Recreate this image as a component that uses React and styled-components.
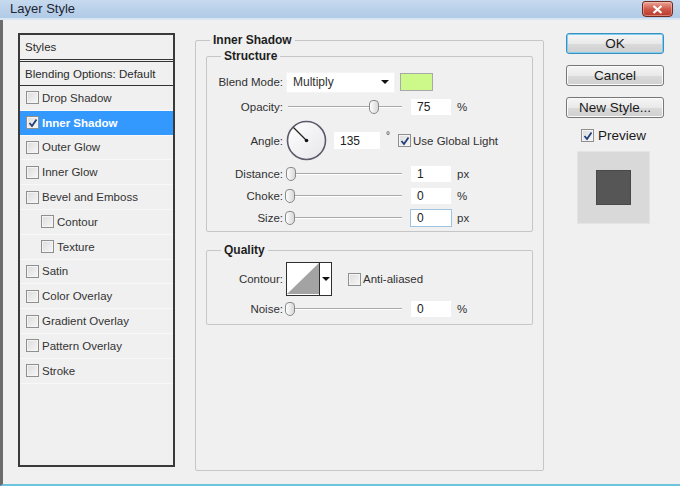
import styled, { createGlobalStyle } from 'styled-components'

const GlobalStyle = createGlobalStyle`
  html, body {
    margin: 0;
    padding: 0;
    background: #f0f0f0;
  }
  body {
    font-family: 'Liberation Sans', Arial, sans-serif;
    font-size: 11.5px;
    color: #303030;
  }
  * {
    box-sizing: border-box;
  }
`

// window frame
const Window = styled.div`
  width: 680px;
  height: 486px;
  display: flex;
  flex-direction: column;
  background: #f0f0f0;
  overflow: hidden;
`

const TitleBar = styled.div`
  height: 20px;
  flex: none;
  display: flex;
  align-items: flex-start;
  justify-content: space-between;
  padding: 0 7px 0 10px;
  background: linear-gradient(#c6d9ef, #b1cae6);
  border-bottom: 2px solid #d9e5f3;
  font-size: 13px;
  color: #1b2533;
`

const TitleText = styled.span`
  line-height: 18px;
`

const CloseButton = styled.div`
  width: 31px;
  height: 16px;
  margin-top: 1px;
  display: flex;
  align-items: center;
  justify-content: center;
  border: 1px solid #6f2b22;
  border-radius: 3px 3px 4px 4px;
  background: linear-gradient(#eaa699 0%, #d0594a 50%, #b83a2c 100%);
  box-shadow: inset 0 0 0 1px rgba(255, 210, 200, 0.45);
`

const Body = styled.div`
  flex: 1;
  display: flex;
  align-items: flex-start;
  padding: 13px 0 0 15px;
  border-left: 3px solid #6c6c6c;
  border-bottom: 2px solid #6cc4de;
`

// left styles list
const StylesPanel = styled.div`
  width: 157px;
  height: 434px;
  flex: none;
  margin-right: 20px;
  border: 2px solid #3a3a3a;
  display: flex;
  flex-direction: column;
`

const PanelHeader = styled.div`
  height: ${(p) => p.$h}px;
  display: flex;
  align-items: center;
  padding-left: 5px;
  border-bottom: ${(p) => (p.$double ? '3px double #333' : '1px solid #333')};
  color: #2a2a2a;
`

const StyleRow = styled.div`
  height: 24.8px;
  flex: none;
  display: flex;
  align-items: center;
  gap: 3px;
  padding-left: ${(p) => (p.$sub ? 21 : 6)}px;
  border-bottom: 1px solid #f8f8f8;
  background: ${(p) => (p.$active ? '#3399ff' : 'transparent')};
  color: ${(p) => (p.$active ? '#ffffff' : '#333333')};
  font-weight: ${(p) => (p.$active ? 700 : 400)};
`

// checkbox
const Box = styled.span`
  width: 13px;
  height: 13px;
  flex: none;
  display: inline-flex;
  align-items: center;
  justify-content: center;
  border: 1px solid #8e8f8f;
  background: linear-gradient(135deg, #dcdcdc, #f7f7f7);
  box-shadow: inset 0 0 0 1px #f4f4f4;
`

const CheckBox = ({ checked }) => (
  <Box>
    {checked && (
      <svg width="10" height="10" viewBox="0 0 10 10">
        <path d="M1.5 5 L4 8 L8.5 1.5" fill="none" stroke="#23407a" strokeWidth="1.8" />
      </svg>
    )}
  </Box>
)

// middle fieldsets
const Group = styled.fieldset`
  margin: ${(p) => p.$mt || 0}px 0 0 0;
  padding: ${(p) => p.$pad};
  border: 1px solid #c6c6c6;
  border-radius: 2px;
  min-width: 0;
  width: ${(p) => (p.$w ? `${p.$w}px` : 'auto')};
  height: ${(p) => (p.$h ? `${p.$h}px` : 'auto')};
  flex: none;
`

const Legend = styled.legend`
  margin-left: ${(p) => p.$ml}px;
  padding: 0 3px;
  font-weight: 700;
  font-size: 12px;
  line-height: 14px;
  color: #1e1e1e;
`

const Row = styled.div`
  height: ${(p) => p.$h}px;
  display: flex;
  align-items: center;
`

const Label = styled.span`
  width: 76px;
  flex: none;
  margin-right: 3px;
  text-align: right;
  color: #303030;
`

const Select = styled.div`
  width: 109px;
  height: 21px;
  display: flex;
  align-items: center;
  justify-content: space-between;
  padding: 0 5px 0 6px;
  background: #ffffff;
  border: 1px solid #f4f4f4;
  font-size: 12px;
`

const Arrow = styled.span`
  width: 0;
  height: 0;
  border-left: 4px solid transparent;
  border-right: 4px solid transparent;
  border-top: 4px solid #111;
`

const Swatch = styled.div`
  width: 33px;
  height: 18px;
  margin-left: 5px;
  background: #cdf98b;
  border: 1px solid #a9a9a9;
`

const SliderTrack = styled.div`
  position: relative;
  width: 118px;
  height: 18px;
  flex: none;
  &::before {
    content: '';
    position: absolute;
    left: 2px;
    right: 2px;
    top: 8px;
    height: 1px;
    background: #a9a9a9;
    box-shadow: 0 1px 0 #ffffff;
  }
`

const Thumb = styled.span`
  position: absolute;
  top: 2px;
  width: 10px;
  height: 14px;
  border: 1px solid #8a8a8a;
  border-radius: 4px 4px 5px 5px;
  background: linear-gradient(90deg, #fdfdfd, #d8d8d8);
`

const Slider = ({ value }) => (
  <SliderTrack>
    <Thumb style={{ left: `${-1 + value * 1.12}px` }} />
  </SliderTrack>
)

const Field = styled.div`
  width: ${(p) => p.$w || 42}px;
  height: ${(p) => p.$hgt || 18}px;
  margin-left: ${(p) => p.$ml || 6}px;
  display: flex;
  align-items: center;
  padding-left: 6px;
  background: #ffffff;
  border: 1px solid ${(p) => (p.$focus ? '#9fc2df' : '#eef0f2')};
  font-size: 12px;
  color: #222;
`

const Unit = styled.span`
  margin-left: 5px;
  color: #303030;
  font-size: ${(p) => (p.$deg ? 10 : 11.5)}px;
  align-self: ${(p) => (p.$deg ? 'flex-start' : 'center')};
  margin-top: ${(p) => (p.$deg ? 12 : 0)}px;
`

const InlineCheck = styled.label`
  display: flex;
  align-items: center;
  gap: 2px;
  margin-left: ${(p) => p.$ml}px;
  color: #303030;
`

const Dial = () => (
  <svg width="41" height="41" viewBox="0 0 41 41">
    <defs>
      <linearGradient id="dialFill" x1="0" y1="0" x2="1" y2="1">
        <stop offset="0" stopColor="#ffffff" />
        <stop offset="1" stopColor="#e6e6ea" />
      </linearGradient>
    </defs>
    <circle cx="20.5" cy="20.5" r="19" fill="url(#dialFill)" stroke="#5b5b6b" strokeWidth="1.6" />
    <line x1="20.5" y1="20.5" x2="7.5" y2="7.5" stroke="#222" strokeWidth="1.2" />
    <circle cx="20.5" cy="20.5" r="1.8" fill="#111" />
  </svg>
)

const ContourBox = styled.div`
  width: 46px;
  height: 34px;
  display: flex;
  border: 1.5px solid #2f2f2f;
  background: #ffffff;
`

const ContourArrow = styled.div`
  flex: 1;
  display: flex;
  align-items: center;
  justify-content: center;
  border-left: 1.5px solid #2f2f2f;
`

// right column
const Side = styled.div`
  width: 98px;
  flex: none;
  margin-left: 22px;
  display: flex;
  flex-direction: column;
`

const Button = styled.div`
  height: 21px;
  margin-bottom: 11px;
  display: flex;
  align-items: center;
  justify-content: center;
  border: 1px solid ${(p) => (p.$default ? '#3c8fbf' : '#777777')};
  border-radius: 3px;
  background: linear-gradient(#f6f6f6 0%, #e9e9e9 50%, #dadada 51%, #d0d0d0 100%);
  box-shadow: ${(p) => (p.$default ? 'inset 0 0 0 1px #7fd0f0' : 'inset 0 0 0 1px #fbfbfb')};
  font-size: 13.5px;
  color: #1a1a1a;
`

const PreviewCheck = styled.label`
  display: flex;
  align-items: center;
  gap: 4px;
  padding-left: 15px;
  margin-top: -1px;
  font-size: 13.5px;
  color: #1a1a1a;
`

const PreviewBox = styled.div`
  width: 73px;
  height: 73px;
  margin: 8px 0 0 11px;
  display: flex;
  align-items: center;
  justify-content: center;
  background: #d9d9d9;
  border: 1px solid #e4e4e4;
`

const PreviewSquare = styled.div`
  width: 35px;
  height: 35px;
  background: #565656;
  border: 1px solid #484848;
`

const styleItems = [
  { label: 'Drop Shadow' },
  { label: 'Inner Shadow', checked: true, active: true },
  { label: 'Outer Glow' },
  { label: 'Inner Glow' },
  { label: 'Bevel and Emboss' },
  { label: 'Contour', sub: true },
  { label: 'Texture', sub: true },
  { label: 'Satin' },
  { label: 'Color Overlay' },
  { label: 'Gradient Overlay' },
  { label: 'Pattern Overlay' },
  { label: 'Stroke' },
]

const sliders = [
  { label: 'Distance:', value: 1, unit: 'px', h: 22 },
  { label: 'Choke:', value: 0, unit: '%', h: 22 },
  { label: 'Size:', value: 0, unit: 'px', h: 22, focus: true },
]

export default function App() {
  return (
    <Window>
      <GlobalStyle />
      <TitleBar>
        <TitleText>Layer Style</TitleText>
        <CloseButton>
          <svg width="11" height="9" viewBox="0 0 11 9">
            <path d="M1.5 1 L9.5 8 M9.5 1 L1.5 8" stroke="#ffffff" strokeWidth="2.2" />
          </svg>
        </CloseButton>
      </TitleBar>

      <Body>
        <StylesPanel>
          <PanelHeader $h={27} $double>Styles</PanelHeader>
          <PanelHeader $h={24}>Blending Options: Default</PanelHeader>
          {styleItems.map((item) => (
            <StyleRow key={item.label} $sub={item.sub} $active={item.active}>
              <CheckBox checked={item.checked} />
              {item.label}
            </StyleRow>
          ))}
        </StylesPanel>

        <Group $w={349} $h={438} $pad="2px 10px 0 10px">
          <Legend $ml={4}>Inner Shadow</Legend>

          <Group $pad="6px 0 2px 0">
            <Legend $ml={14}>Structure</Legend>
            <Row $h={26}>
              <Label>Blend Mode:</Label>
              <Select>
                Multiply
                <Arrow />
              </Select>
              <Swatch />
            </Row>
            <Row $h={23}>
              <Label>Opacity:</Label>
              <Slider value={75} />
              <Field>75</Field>
              <Unit>%</Unit>
            </Row>
            <Row $h={45}>
              <Label>Angle:</Label>
              <Dial />
              <Field $w={48} $hgt={19} $ml={6}>135</Field>
              <Unit $deg>°</Unit>
              <InlineCheck $ml={8}>
                <CheckBox checked />
                Use Global Light
              </InlineCheck>
            </Row>
            {sliders.map((s) => (
              <Row key={s.label} $h={s.h}>
                <Label>{s.label}</Label>
                <Slider value={s.value} />
                <Field $focus={s.focus}>{s.value}</Field>
                <Unit>{s.unit}</Unit>
              </Row>
            ))}
          </Group>

          <Group $mt={11} $pad="3px 0 4px 0">
            <Legend $ml={14}>Quality</Legend>
            <Row $h={38}>
              <Label>Contour:</Label>
              <ContourBox>
                <svg width="32" height="31" viewBox="0 0 32 31" preserveAspectRatio="none">
                  <polygon points="0,31 32,0 32,31" fill="#a3a3a3" />
                </svg>
                <ContourArrow>
                  <Arrow />
                </ContourArrow>
              </ContourBox>
              <InlineCheck $ml={16}>
                <CheckBox />
                Anti-aliased
              </InlineCheck>
            </Row>
            <Row $h={22}>
              <Label>Noise:</Label>
              <Slider value={0} />
              <Field>0</Field>
              <Unit>%</Unit>
            </Row>
          </Group>
        </Group>

        <Side>
          <Button $default>OK</Button>
          <Button>Cancel</Button>
          <Button>New Style...</Button>
          <PreviewCheck>
            <CheckBox checked />
            Preview
          </PreviewCheck>
          <PreviewBox>
            <PreviewSquare />
          </PreviewBox>
        </Side>
      </Body>
    </Window>
  )
}
